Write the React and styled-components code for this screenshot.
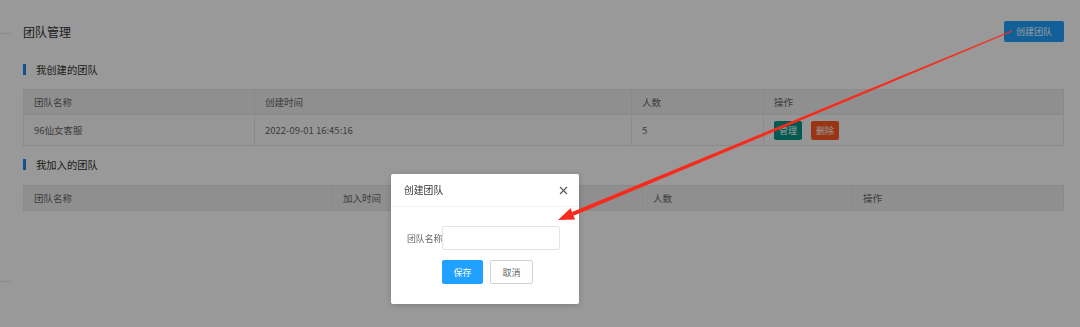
import React from "react";
import styled, { createGlobalStyle } from "styled-components";

const Global = createGlobalStyle`
  html, body { margin: 0; padding: 0; background: #fff; }
  body { font-family: "Noto Sans CJK SC", "Noto Sans", sans-serif; color: #333; }
  * { box-sizing: border-box; }
`;

const Shell = styled.div`
  display: flex;
  width: 1080px;
  height: 327px;
  overflow: hidden;
`;

const SideStub = styled.div`
  width: 11px;
  flex: none;
  display: flex;
  flex-direction: column;
  padding-top: 33px;
`;

const StubLine = styled.div`
  height: 1px;
  background: #e8e8e8;
  margin-bottom: ${(p) => p.$after || 0}px;
`;

const Main = styled.main`
  flex: 1;
  padding: 21px 17px 0 12px;
  display: flex;
  flex-direction: column;
`;

const TopBar = styled.div`
  display: flex;
  align-items: center;
  justify-content: space-between;
  height: 21px;
`;

const PageTitle = styled.h1`
  margin: 0;
  font-size: 12px;
  font-weight: 400;
  color: #333;
`;

const Btn = styled.button`
  border: none;
  border-radius: 2px;
  color: #fff;
  font-family: inherit;
  font-size: ${(p) => p.$fs || 9}px;
  height: ${(p) => p.$h || 21}px;
  padding: 0 ${(p) => p.$px || 5}px;
  background: ${(p) => p.$bg || "#20a0ff"};
  cursor: pointer;
  line-height: 1;
`;

const SectionHead = styled.div`
  display: flex;
  align-items: center;
  height: 11px;
  margin-top: ${(p) => p.$mt}px;
  font-size: 10.3px;
  color: #333;
  &::before {
    content: "";
    width: 3px;
    height: 11px;
    background: #1e88e5;
    margin-right: 10px;
  }
`;

const Table = styled.table`
  margin-top: ${(p) => p.$mt}px;
  width: 1040px;
  border-collapse: collapse;
  table-layout: fixed;
  border: 1px solid #e6e6e6;
  font-size: 9.5px;
  color: #666;
`;

const Th = styled.th`
  background: #eeeeee;
  height: 25px;
  padding: 0 10px;
  text-align: left;
  font-weight: 400;
  border: 1px solid #e6e6e6;
`;

const Td = styled.td`
  background: #fbfbfb;
  height: 31px;
  padding: 0 10px;
  border: 1px solid #e6e6e6;
`;

const Ops = styled.div`
  display: flex;
  gap: 9px;
`;

const Mask = styled.div`
  position: fixed;
  inset: 0;
  background: rgba(0, 0, 0, 0.4);
  z-index: 10;
`;

const Dialog = styled.div`
  position: fixed;
  left: 391px;
  top: 174px;
  width: 188px;
  height: 130px;
  background: #fff;
  border-radius: 2px;
  box-shadow: 0 1px 6px rgba(0, 0, 0, 0.2);
  z-index: 11;
  display: flex;
  flex-direction: column;
`;

const DialogHead = styled.div`
  height: 33px;
  display: flex;
  align-items: center;
  justify-content: space-between;
  padding: 0 11px 0 13px;
  border-bottom: 1px solid #f2f2f2;
  font-size: 9.8px;
  color: #333;
`;

const Close = styled.span`
  display: flex;
  width: 9px;
  height: 9px;
  color: #555;
`;

const DialogBody = styled.div`
  padding: 19px 19px 0 16px;
  display: flex;
  flex-direction: column;
  gap: 10px;
`;

const FieldRow = styled.div`
  display: flex;
  align-items: center;
`;

const Label = styled.label`
  width: 35px;
  font-size: 8.9px;
  color: #666;
  white-space: nowrap;
`;

const Input = styled.input`
  width: 118px;
  height: 24px;
  border: 1px solid #e4e4e4;
  border-radius: 2px;
  outline: none;
`;

const ActionRow = styled.div`
  display: flex;
  gap: 7px;
  padding-left: 35px;
`;

const SaveBtn = styled(Btn)`
  width: 41px;
  height: 24px;
  padding: 0;
`;

const GhostBtn = styled.button`
  height: 24px;
  width: 43px;
  border: 1px solid #d0d0d0;
  border-radius: 2px;
  background: #fff;
  color: #666;
  font-family: inherit;
  font-size: 9px;
`;

const Annotation = styled.svg`
  position: fixed;
  left: 0;
  top: 0;
  z-index: 12;
  pointer-events: none;
`;

const created = [{ name: "96仙女客服", time: "2022-09-01 16:45:16", count: 5 }];

export default function App() {
  return (
    <>
      <Global />
      <Shell>
        <SideStub>
          <StubLine $after={247} />
          <StubLine />
        </SideStub>
        <Main>
          <TopBar>
            <PageTitle>团队管理</PageTitle>
            <Btn $bg="#20a0ff" $px={12}>创建团队</Btn>
          </TopBar>

          <SectionHead $mt={22}>我创建的团队</SectionHead>
          <Table $mt={14}>
            <colgroup>
              <col style={{ width: 231 }} />
              <col style={{ width: 377 }} />
              <col style={{ width: 132 }} />
              <col style={{ width: 300 }} />
            </colgroup>
            <thead>
              <tr>
                <Th>团队名称</Th>
                <Th>创建时间</Th>
                <Th>人数</Th>
                <Th>操作</Th>
              </tr>
            </thead>
            <tbody>
              {created.map((r) => (
                <tr key={r.name}>
                  <Td>{r.name}</Td>
                  <Td>{r.time}</Td>
                  <Td>{r.count}</Td>
                  <Td>
                    <Ops>
                      <Btn $bg="#009688" $h={19} $px={5}>管理</Btn>
                      <Btn $bg="#ff5722" $h={19} $px={5}>删除</Btn>
                    </Ops>
                  </Td>
                </tr>
              ))}
            </tbody>
          </Table>

          <SectionHead $mt={13}>我加入的团队</SectionHead>
          <Table $mt={15}>
            <colgroup>
              <col style={{ width: 309 }} />
              <col style={{ width: 310 }} />
              <col style={{ width: 210 }} />
              <col style={{ width: 211 }} />
            </colgroup>
            <thead>
              <tr>
                <Th>团队名称</Th>
                <Th>加入时间</Th>
                <Th>人数</Th>
                <Th>操作</Th>
              </tr>
            </thead>
          </Table>
        </Main>
      </Shell>

      <Mask />
      <Dialog>
        <DialogHead>
          <span>创建团队</span>
          <Close>
            <svg width="9" height="9" viewBox="0 0 9 9">
              <path d="M1 1L8 8M8 1L1 8" stroke="currentColor" strokeWidth="1.1" />
            </svg>
          </Close>
        </DialogHead>
        <DialogBody>
          <FieldRow>
            <Label>团队名称</Label>
            <Input />
          </FieldRow>
          <ActionRow>
            <SaveBtn>保存</SaveBtn>
            <GhostBtn>取消</GhostBtn>
          </ActionRow>
        </DialogBody>
      </Dialog>

      <Annotation width="1080" height="327" viewBox="0 0 1080 327">
        <polygon
          points="1012.2,31.6 1011.8,30.4 572.0,212.0 573.6,215.7"
          fill="#f72a1c"
        />
        <polygon points="558,220 575.1,219.4 570.5,208.3" fill="#f72a1c" />
      </Annotation>
    </>
  );
}
